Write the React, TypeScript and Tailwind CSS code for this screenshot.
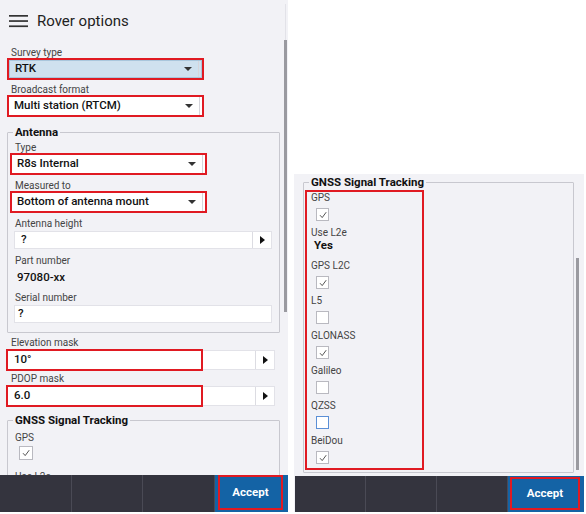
import React from "react";

const font = { fontFamily: "Roboto, 'Noto Sans', sans-serif" };

function Caret() {
  return <span className="block w-0 h-0 border-l-[4px] border-r-[4px] border-t-[4px] border-l-transparent border-r-transparent border-t-[#333]" />;
}

function Arrow() {
  return <span className="block w-0 h-0 border-t-[4px] border-b-[4px] border-l-[5px] border-t-transparent border-b-transparent border-l-[#111]" />;
}

function Label({ children, className = "" }: { children: React.ReactNode; className?: string }) {
  return <div className={`text-[10px] leading-[11px] text-[#444] whitespace-nowrap ${className}`}>{children}</div>;
}

function Marked({ children, className = "" }: { children: React.ReactNode; className?: string }) {
  return <div className={`border-2 border-[#e01a22] ${className}`}>{children}</div>;
}

function Dropdown({ value, selected = false }: { value: string; selected?: boolean }) {
  return (
    <div
      className={`flex items-center h-[18px] pl-[5px] ${
        selected ? "bg-[#cfe1ef] border border-[#a9c6dc]" : "bg-white"
      }`}
    >
      <span className="flex-1 text-[11.5px] font-medium text-[#111] leading-none">{value}</span>
      <span className="w-[20px] flex justify-center">
        <Caret />
      </span>
      <span className="w-px self-stretch bg-[#d6d6dc]" />
      <span className="w-[2px]" />
    </div>
  );
}

function ArrowInput({ value, className = "" }: { value: string; className?: string }) {
  return (
    <div className={`flex items-center bg-white border border-[#e2e2e8] ${className}`}>
      <span className="flex-1 pl-[6px] text-[11.5px] font-medium text-[#111] leading-none">{value}</span>
      <span className="w-px self-stretch bg-[#dcdce2]" />
      <span className="w-[18px] flex justify-center">
        <Arrow />
      </span>
    </div>
  );
}

function Checkbox({ checked, focus = false, size }: { checked: boolean; focus?: boolean; size: "sm" | "md" }) {
  const dim = size === "md" ? "w-[14px] h-[14px]" : "w-[13px] h-[13px]";
  return (
    <div
      className={`${dim} bg-white flex items-center justify-center ${
        focus ? "border-[1.5px] border-[#5b8fd6]" : "border border-[#b9b9c0]"
      }`}
    >
      {checked && (
        <svg width="10" height="10" viewBox="0 0 10 10">
          <polyline points="2,5.2 4.2,7.6 8.2,2.2" fill="none" stroke="#555" strokeWidth="1" />
        </svg>
      )}
    </div>
  );
}

function Fieldset({ title, children, className = "" }: { title: string; children: React.ReactNode; className?: string }) {
  return (
    <div className={`relative border border-[#c8c8cf] rounded-[1px] ${className}`}>
      <div className="absolute -top-[7px] left-[5px] px-[2px] bg-[#f2f2f6] text-[11.5px] leading-[13px] font-bold text-[#111] whitespace-nowrap">
        {title}
      </div>
      {children}
    </div>
  );
}

function AcceptCell({ className }: { className: string }) {
  return (
    <div className="flex-1 bg-[#1463a5] flex">
      <div className={`flex-1 border-2 border-[#e01a22] flex items-center justify-center text-white text-[11.5px] font-bold ${className}`}>
        Accept
      </div>
    </div>
  );
}

function CheckItem({
  label,
  checked,
  focus,
  size,
  className = "h-[35px]",
}: {
  label: string;
  checked: boolean;
  focus?: boolean;
  size: "sm" | "md";
  className?: string;
}) {
  return (
    <div className={className}>
      <Label>{label}</Label>
      <div className={size === "md" ? "pl-[4px] mt-[3px]" : "pl-[5px] mt-[5px]"}>
        <Checkbox checked={checked} focus={focus} size={size} />
      </div>
    </div>
  );
}

function MarkedInput({ value }: { value: string }) {
  return (
    <div className="relative mt-[2px] w-[268px]">
      <ArrowInput value={value} className="h-[20px]" />
      <div className="absolute -left-px -top-px w-[197px] h-[22px] border-2 border-[#e01a22]" />
    </div>
  );
}

function LeftScreen() {
  return (
    <div className="relative w-[288px] h-[512px] bg-[#f2f2f6] overflow-hidden">
      <div className="flex items-center h-[42px] pl-[9px]">
        <svg width="20" height="14" viewBox="0 0 20 14">
          <rect x="0" y="1" width="19" height="1.7" fill="#333" />
          <rect x="0" y="6.2" width="19" height="1.7" fill="#333" />
          <rect x="0" y="11.4" width="19" height="1.7" fill="#333" />
        </svg>
        <span className="ml-[8px] text-[15px] text-[#222]">Rover options</span>
      </div>

      <div className="absolute right-[1px] top-[40px] w-[3px] h-[272px] bg-[#9a9aa0]" />
      <div className="absolute right-[2px] top-[4px] w-px h-[36px] bg-[#e2e2e8]" />

      <div className="pl-[7px]">
        <Label className="pl-[4px] mt-[5px]">Survey type</Label>
        <Marked className="w-[197px]">
          <Dropdown value="RTK" selected />
        </Marked>
        <Label className="pl-[4px] mt-[4px]">Broadcast format</Label>
        <Marked className="w-[197px]">
          <Dropdown value="Multi station (RTCM)" />
        </Marked>

        <Fieldset title="Antenna" className="mt-[15px] w-[273px] h-[201px] pl-[7px] pr-[7px]">
          <Label className="mt-[9px]">Type</Label>
          <Marked className="-ml-[5px] w-[197px]">
            <Dropdown value="R8s Internal" />
          </Marked>
          <Label className="mt-[5px]">Measured to</Label>
          <Marked className="-ml-[5px] w-[197px]">
            <Dropdown value="Bottom of antenna mount" />
          </Marked>
          <Label className="mt-[5px]">Antenna height</Label>
          <ArrowInput value="?" className="mt-[2px] h-[18px] -ml-px" />
          <Label className="mt-[6px]">Part number</Label>
          <div className="pl-[2px] mt-[5px] text-[11.5px] leading-[13px] font-medium text-[#111]">97080-xx</div>
          <Label className="mt-[8px]">Serial number</Label>
          <div className="mt-[2px] -ml-px h-[18px] bg-white border border-[#e2e2e8] flex items-center pl-[3px] text-[11.5px] font-medium text-[#111]">
            ?
          </div>
        </Fieldset>

        <Label className="pl-[4px] mt-[4px]">Elevation mask</Label>
        <MarkedInput value="10°" />
        <Label className="pl-[4px] mt-[3px]">PDOP mask</Label>
        <MarkedInput value="6.0" />

        <Fieldset title="GNSS Signal Tracking" className="mt-[14px] w-[273px] h-[120px] pl-[7px]">
          <div className="mt-[11px]">
            <CheckItem label="GPS" checked size="md" className="h-[39px]" />
            <Label>Use L2e</Label>
          </div>
        </Fieldset>
      </div>

      <div className="absolute left-0 right-0 top-[475px] flex h-[37px] bg-[#34343e]">
        <div className="w-[72px] border-r border-[#4a4a55]" />
        <div className="w-[71px] border-r border-[#4a4a55]" />
        <div className="w-[72px] border-r border-[#4a4a55]" />
        <AcceptCell className="ml-[3px] mr-[5px] mb-[2px]" />
      </div>
    </div>
  );
}

function RightScreen() {
  return (
    <div className="relative w-[290px] h-[338px] bg-[#f2f2f6] overflow-hidden">
      <div className="absolute right-[5px] top-[84px] w-[3px] h-[212px] bg-[#9a9aa0]" />
      <Fieldset title="GNSS Signal Tracking" className="mt-[8px] ml-[9px] w-[271px] h-[291px]">
        <div className="ml-[1px] mt-[7px] w-[119px] border-2 border-[#e01a22] pl-[4px]">
          <CheckItem label="GPS" checked size="sm" />
          <div className="h-[33px]">
            <Label>Use L2e</Label>
            <div className="pl-[3px] mt-[1px] text-[11.5px] leading-[13px] font-bold text-[#111]">Yes</div>
          </div>
          <CheckItem label="GPS L2C" checked size="sm" />
          <CheckItem label="L5" checked={false} size="sm" />
          <CheckItem label="GLONASS" checked size="sm" />
          <CheckItem label="Galileo" checked={false} size="sm" />
          <CheckItem label="QZSS" checked={false} focus size="sm" />
          <CheckItem label="BeiDou" checked size="sm" className="h-[33px]" />
        </div>
      </Fieldset>
      <div className="absolute left-[1px] right-0 top-[302px] flex h-[36px] bg-[#34343e]">
        <div className="w-[71px] border-r border-[#4a4a55]" />
        <div className="w-[71px] border-r border-[#4a4a55]" />
        <div className="w-[71px] border-r border-[#4a4a55]" />
        <AcceptCell className="ml-[2px] mr-[4px] mt-[1px] mb-[2px]" />
      </div>
    </div>
  );
}

export default function App() {
  return (
    <div className="w-[586px] h-[514px] bg-white flex" style={font}>
      <LeftScreen />
      <div className="ml-[6px] mt-[174px]">
        <RightScreen />
      </div>
    </div>
  );
}
